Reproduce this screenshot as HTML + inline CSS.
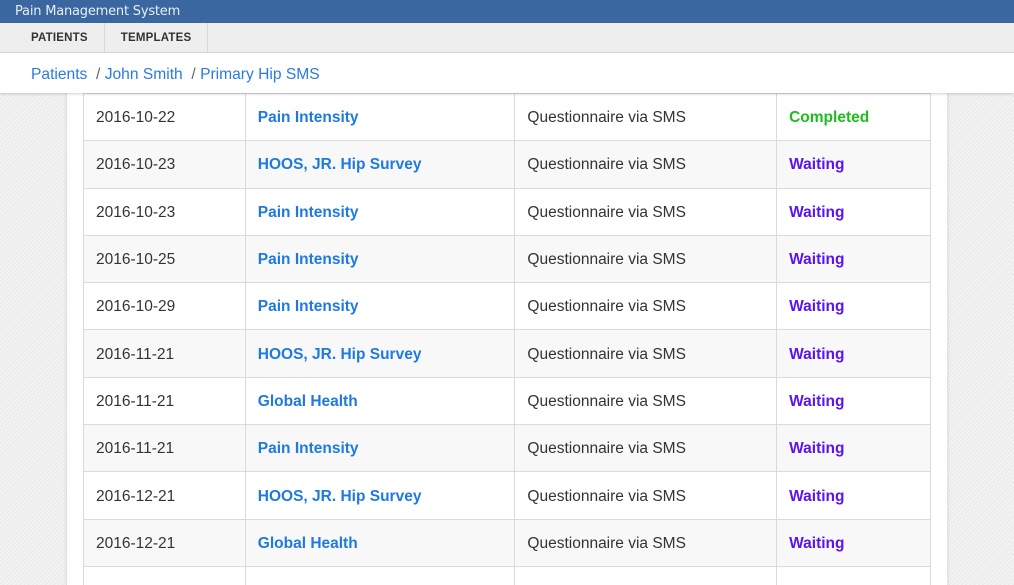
<!DOCTYPE html>
<html><head><meta charset="utf-8"><style>
*{margin:0;padding:0;box-sizing:border-box}
html,body{width:1014px;height:585px;overflow:hidden}
body{font-family:"Liberation Sans",sans-serif;background:#efefef repeating-linear-gradient(135deg,#f4f4f4 0 1px,#e9e9e9 1px 2px,#f2f2f2 2px 3px);position:relative}
.top{position:absolute;left:0;top:0;width:1014px;height:23px;background:#3a67a0;color:#e8eef6;font-family:"DejaVu Sans","Liberation Sans",sans-serif;font-size:13px;line-height:24px;padding-left:15px;letter-spacing:-0.2px}
.nav{position:absolute;left:0;top:23px;width:1014px;height:30px;background:#eeeeee;border-bottom:1px solid #dcdcdc;display:flex}
.nav div{font-size:11.5px;font-weight:bold;color:#333;letter-spacing:0.2px;line-height:30px;padding:0 16px 0 31px;border-right:1px solid #d8d8d8}
.nav div+div{padding:0 16px}
.bc{position:absolute;left:0;top:53px;width:1014px;height:40px;background:#fff;box-shadow:0 1px 3px rgba(0,0,0,.18);font-size:15.6px;line-height:44px;padding-left:31px;color:#666;z-index:2}
.bc a{color:#2a7ae2;text-decoration:none}
.panel{position:absolute;left:67px;top:93px;width:880px;height:500px;background:#fff;box-shadow:0 0 4px rgba(0,0,0,.15)}
table{position:absolute;left:16px;top:0;border-collapse:collapse;width:848px}
td{border:1px solid #dadada;height:47.3px;font-size:15.5px;padding-left:12px;padding-top:2px;color:#333}
tr:nth-child(even) td{background:#f8f8f8}
td.l{color:#1f7ae0;font-weight:bold}
td.c{color:#1dbd1d;font-weight:bold}
td.w{color:#5b14f0;font-weight:bold}
</style></head><body>
<div class="top">Pain Management System</div>
<div class="nav"><div>PATIENTS</div><div>TEMPLATES</div></div>
<div class="bc"><a>Patients</a> &nbsp;/ <a>John Smith</a> &nbsp;/ <a>Primary Hip SMS</a></div>
<div class="panel"><table>
<colgroup><col style="width:162px"><col style="width:270px"><col style="width:262px"><col style="width:154px"></colgroup>
<tr><td>2016-10-22</td><td class="l">Pain Intensity</td><td>Questionnaire via SMS</td><td class="c">Completed</td></tr>
<tr><td>2016-10-23</td><td class="l">HOOS, JR. Hip Survey</td><td>Questionnaire via SMS</td><td class="w">Waiting</td></tr>
<tr><td>2016-10-23</td><td class="l">Pain Intensity</td><td>Questionnaire via SMS</td><td class="w">Waiting</td></tr>
<tr><td>2016-10-25</td><td class="l">Pain Intensity</td><td>Questionnaire via SMS</td><td class="w">Waiting</td></tr>
<tr><td>2016-10-29</td><td class="l">Pain Intensity</td><td>Questionnaire via SMS</td><td class="w">Waiting</td></tr>
<tr><td>2016-11-21</td><td class="l">HOOS, JR. Hip Survey</td><td>Questionnaire via SMS</td><td class="w">Waiting</td></tr>
<tr><td>2016-11-21</td><td class="l">Global Health</td><td>Questionnaire via SMS</td><td class="w">Waiting</td></tr>
<tr><td>2016-11-21</td><td class="l">Pain Intensity</td><td>Questionnaire via SMS</td><td class="w">Waiting</td></tr>
<tr><td>2016-12-21</td><td class="l">HOOS, JR. Hip Survey</td><td>Questionnaire via SMS</td><td class="w">Waiting</td></tr>
<tr><td>2016-12-21</td><td class="l">Global Health</td><td>Questionnaire via SMS</td><td class="w">Waiting</td></tr>
<tr><td></td><td></td><td></td><td></td></tr>
</table></div>
</body></html>
